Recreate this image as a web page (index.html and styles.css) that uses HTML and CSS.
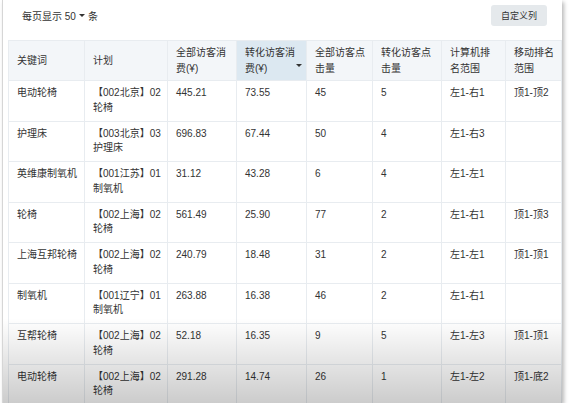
FILE: index.html
```html
<!DOCTYPE html>
<html lang="zh">
<head>
<meta charset="utf-8">
<link rel="stylesheet" href="styles.css">
</head>
<body>
<div class="panel">
  <div class="toolbar">
    <div class="pagesize">每页显示 50 <span class="caret"></span> 条</div>
    <button class="btn">自定义列</button>
  </div>
  <table class="grid">
    <colgroup>
      <col style="width:76px"><col style="width:83px"><col style="width:69px"><col style="width:70px">
      <col style="width:66px"><col style="width:69px"><col style="width:64px"><col style="width:56px">
    </colgroup>
    <thead>
      <tr>
        <th>关键词</th>
        <th>计划</th>
        <th>全部访客消费(¥)</th>
        <th class="sorted">转化访客消费(¥)<span class="caret sort"></span></th>
        <th>全部访客点击量</th>
        <th>转化访客点击量</th>
        <th>计算机排名范围</th>
        <th>移动排名范围</th>
      </tr>
    </thead>
    <tbody>
      <tr><td>电动轮椅</td><td>【002北京】02<br>轮椅</td><td>445.21</td><td>73.55</td><td>45</td><td>5</td><td>左1-右1</td><td>顶1-顶2</td></tr>
      <tr><td>护理床</td><td>【003北京】03<br>护理床</td><td>696.83</td><td>67.44</td><td>50</td><td>4</td><td>左1-右3</td><td></td></tr>
      <tr><td>英维康制氧机</td><td>【001江苏】01<br>制氧机</td><td>31.12</td><td>43.28</td><td>6</td><td>4</td><td>左1-左1</td><td></td></tr>
      <tr><td>轮椅</td><td>【002上海】02<br>轮椅</td><td>561.49</td><td>25.90</td><td>77</td><td>2</td><td>左1-右1</td><td>顶1-顶3</td></tr>
      <tr><td>上海互邦轮椅</td><td>【002上海】02<br>轮椅</td><td>240.79</td><td>18.48</td><td>31</td><td>2</td><td>左1-左1</td><td>顶1-顶1</td></tr>
      <tr><td>制氧机</td><td>【001辽宁】01<br>制氧机</td><td>263.88</td><td>16.38</td><td>46</td><td>2</td><td>左1-右1</td><td></td></tr>
      <tr><td>互帮轮椅</td><td>【002上海】02<br>轮椅</td><td>52.18</td><td>16.35</td><td>9</td><td>5</td><td>左1-左3</td><td>顶1-顶1</td></tr>
      <tr><td>电动轮椅</td><td>【002上海】02<br>轮椅</td><td>291.28</td><td>14.74</td><td>26</td><td>1</td><td>左1-左2</td><td>顶1-底2</td></tr>
    </tbody>
  </table>
  <div class="fade"></div>
</div>
</body>
</html>
```
FILE: styles.css
```css
html, body {
  margin: 0;
  padding: 0;
  background: #fff;
}
body {
  font-family: "Liberation Sans", "Noto Sans CJK SC", sans-serif;
  color: #333;
  font-size: 10px;
}
.panel {
  position: relative;
  box-sizing: border-box;
  width: 560px;
  height: 403px;
  margin-left: 2px;
  padding-left: 5px;
  border-left: 1px solid #d6d6d6;
  background: #fff;
  box-shadow: 2px 2px 4px rgba(0, 0, 0, 0.28);
  overflow: hidden;
}
.toolbar {
  display: flex;
  align-items: center;
  justify-content: space-between;
  width: 553px;
  height: 31px;
  margin-bottom: 9px;
}
.pagesize {
  margin-left: 14px;
  font-size: 10px;
  display: flex;
  align-items: center;
  gap: 3px;
  margin-top: -1px;
}
.caret {
  display: inline-block;
  width: 0;
  height: 0;
  border-left: 3px solid transparent;
  border-right: 3px solid transparent;
  border-top: 3px solid #333;
}
.btn {
  margin-right: 14px;
  width: 56px;
  height: 21px;
  border: none;
  border-radius: 3px;
  background: #e5e9ec;
  color: #333;
  font-family: inherit;
  font-size: 9px;
  padding: 0;
}
.grid {
  width: 553px;
  table-layout: fixed;
  border-collapse: collapse;
  border: 1px solid #e4e8ed;
}
.grid th, .grid td {
  border: 1px solid #e8ecf0;
  text-align: left;
  font-weight: normal;
  padding: 0 6px 0 8px;
}
.grid th {
  height: 39px;
  line-height: 16px;
  background: #f3f6f9;
  vertical-align: middle;
  position: relative;
}
.grid th.sorted {
  background: #dce8f1;
}
.caret.sort {
  position: absolute;
  right: 4px;
  bottom: 13px;
}
.grid td {
  padding-top: 5px;
  padding-bottom: 5px;
  height: 29.5px;
  line-height: 14.5px;
  vertical-align: top;
}
.fade {
  position: absolute;
  left: 0;
  right: 0;
  bottom: 0;
  height: 85px;
  background: linear-gradient(rgba(0, 0, 0, 0), rgba(0, 0, 0, 0.2));
  pointer-events: none;
}
```
